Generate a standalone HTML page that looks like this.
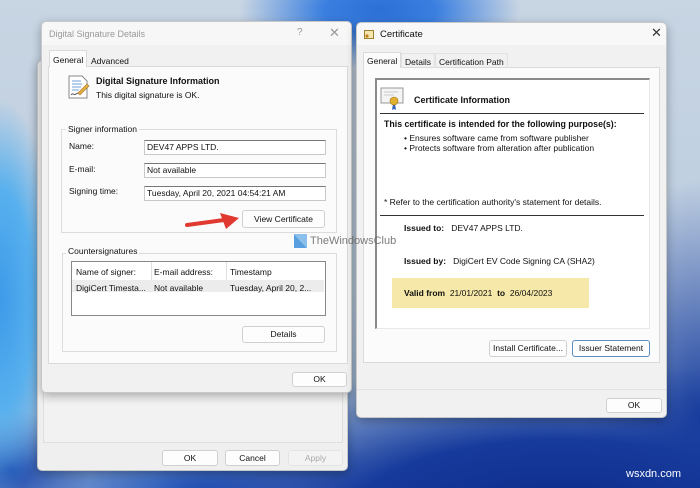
<!DOCTYPE html>
<html><head><meta charset="utf-8"><style>
*{box-sizing:border-box;margin:0;padding:0}
body{width:700px;height:488px;overflow:hidden;position:relative;font-family:"Liberation Sans",sans-serif;font-size:8.5px;color:#111;
background:
radial-gradient(ellipse 140px 60px at 380px 10px,#2c6fd6 0%,#3a7fe0 40%,rgba(80,140,220,0) 100%),
radial-gradient(ellipse 60px 200px at 0px 300px,#3d9ae8 0%,#58b0ee 55%,rgba(120,180,230,0) 100%),
radial-gradient(ellipse 80px 60px at 10px 470px,#1640a8 0%,rgba(30,70,170,0) 100%),
radial-gradient(ellipse 420px 160px at 560px 520px,#0d2a88 0%,#163a9c 50%,rgba(30,70,170,0) 100%),
radial-gradient(ellipse 120px 240px at 700px 420px,#1b3f9e 0%,rgba(40,80,170,0) 100%),
radial-gradient(ellipse 200px 80px at 200px 495px,#1d4fb8 0%,rgba(40,90,190,0) 100%),
linear-gradient(180deg,#c8d5e3 0%,#bccde0 60%,#8fb0d8 100%);}
.abs{position:absolute}
.win{position:absolute;background:#f0f0f0;border:1px solid #c8c8c8;border-radius:5px;box-shadow:0 3px 10px rgba(0,0,0,.3)}
.btn{position:absolute;background:#fdfdfd;border:1px solid #d0d0d0;border-radius:3px;text-align:center;font-size:8.5px;color:#111}
.field{position:absolute;background:#fff;border:1px solid #c8c8c8;border-top:1.5px solid #777;padding-left:2px;font-size:8.5px;line-height:13px}
.grp{position:absolute;border:1px solid #dcdcdc}
.lbl{position:absolute;white-space:nowrap}
b{font-weight:bold}
</style></head><body>

<div class="win" style="left:37px;top:60px;width:311px;height:411px;background:#efefef">
  <div class="abs" style="left:5px;top:0;width:300px;height:382px;border:1px solid #dedede;background:#f2f2f2"></div>
</div>
<div class="btn" style="left:162px;top:450px;width:56px;height:16px;line-height:14px">OK</div>
<div class="btn" style="left:225px;top:450px;width:55px;height:16px;line-height:14px">Cancel</div>
<div class="btn" style="left:288px;top:450px;width:55px;height:16px;line-height:14px;color:#aaa;background:#f3f3f3;border-color:#e4e4e4">Apply</div>

<div class="win" style="left:41px;top:21px;width:311px;height:372px;background:#f1f1f1">
  <div class="abs" style="left:0;top:0;width:309px;height:23px;background:#f7f7f7;border-radius:5px 5px 0 0"></div>
  <div class="lbl" style="left:7px;top:7px;color:#999;font-size:9px">Digital Signature Details</div>
  <div class="lbl" style="left:255px;top:5px;color:#999;font-size:10px">?</div>
  <div class="lbl" style="left:287px;top:3px;color:#999;font-size:13px">✕</div>
  <div class="abs" style="left:6px;top:44px;width:300px;height:298px;background:#fbfbfb;border:1px solid #dadada"></div>
  <div class="abs" style="left:7px;top:28px;width:38px;height:17px;background:#fbfbfb;border:1px solid #dadada;border-bottom:none"></div>
  <div class="lbl" style="left:11px;top:33px">General</div>
  <div class="lbl" style="left:49px;top:34px">Advanced</div>
  <svg class="abs" style="left:25px;top:52px" width="24" height="26" viewBox="0 0 24 26">
    <path d="M2 2h13l5 5v17H2z" fill="#fff" stroke="#888"/>
    <path d="M5 7h9M5 10h10M5 13h9M5 16h7" stroke="#6fa0d8"/>
    <path d="M4 21c2-3 3 1 5-1s2 0 4-1" stroke="#555" fill="none"/>
    <path d="M11 19l9-9 2 2-9 9z" fill="#e8b040" stroke="#a07020" stroke-width=".6"/>
  </svg>
  <div class="lbl" style="left:54px;top:54px;font-weight:bold;font-size:9px">Digital Signature Information</div>
  <div class="lbl" style="left:54px;top:68px">This digital signature is OK.</div>
  <div class="grp" style="left:19px;top:107px;width:276px;height:104px"></div>
  <div class="lbl" style="left:24px;top:102px;background:#fbfbfb;padding:0 2px">Signer information</div>
  <div class="lbl" style="left:27px;top:119px">Name:</div>
  <div class="field" style="left:102px;top:118px;width:182px;height:15px">DEV47 APPS LTD.</div>
  <div class="lbl" style="left:27px;top:142px">E-mail:</div>
  <div class="field" style="left:102px;top:141px;width:182px;height:15px">Not available</div>
  <div class="lbl" style="left:27px;top:164px">Signing time:</div>
  <div class="field" style="left:102px;top:164px;width:182px;height:15px">Tuesday, April 20, 2021 04:54:21 AM</div>
  <div class="btn" style="left:200px;top:188px;width:83px;height:18px;line-height:16px">View Certificate</div>
  <svg class="abs" style="left:142px;top:189px" width="58" height="20" viewBox="0 0 58 20">
    <path d="M3 14L40 9" stroke="#e03a30" stroke-width="4" stroke-linecap="round"/>
    <path d="M36 2L55 7L42 18z" fill="#e03a30"/>
  </svg>
  <div class="grp" style="left:20px;top:231px;width:275px;height:99px"></div>
  <div class="lbl" style="left:24px;top:224px;background:#fbfbfb;padding:0 2px">Countersignatures</div>
  <div class="abs" style="left:29px;top:239px;width:255px;height:55px;background:#fff;border:1px solid #888"></div>
  <div class="abs" style="left:109px;top:240px;width:1px;height:18px;background:#e0e0e0"></div>
  <div class="abs" style="left:184px;top:240px;width:1px;height:18px;background:#e0e0e0"></div>
  <div class="abs" style="left:30px;top:258px;width:252px;height:12px;background:#ececec"></div>
  <div class="lbl" style="left:34px;top:245px">Name of signer:</div>
  <div class="lbl" style="left:112px;top:245px">E-mail address:</div>
  <div class="lbl" style="left:188px;top:245px">Timestamp</div>
  <div class="lbl" style="left:34px;top:261px">DigiCert Timesta...</div>
  <div class="lbl" style="left:112px;top:261px">Not available</div>
  <div class="lbl" style="left:188px;top:261px">Tuesday, April 20, 2...</div>
  <div class="btn" style="left:200px;top:304px;width:83px;height:17px;line-height:15px">Details</div>
  <div class="btn" style="left:250px;top:350px;width:55px;height:15px;line-height:13px">OK</div>
</div>

<div class="win" style="left:356px;top:22px;width:311px;height:396px;background:#f1f1f1">
  <div class="abs" style="left:0;top:0;width:309px;height:22px;background:#f8f8f8;border-radius:5px 5px 0 0"></div>
  <svg class="abs" style="left:7px;top:7px" width="10" height="9"><rect x=".5" y=".5" width="9" height="8" fill="#f5e6b0" stroke="#a08030"/><circle cx="3" cy="6" r="1.6" fill="#c08020"/></svg>
  <div class="lbl" style="left:23px;top:6px;font-size:9.5px">Certificate</div>
  <div class="lbl" style="left:294px;top:2px;font-size:13px;color:#333">✕</div>
  <div class="abs" style="left:6px;top:44px;width:297px;height:296px;background:#fbfbfb;border:1px solid #dadada"></div>
  <div class="abs" style="left:6px;top:29px;width:38px;height:16px;background:#fbfbfb;border:1px solid #dadada;border-bottom:none"></div>
  <div class="abs" style="left:44px;top:30px;width:34px;height:15px;border:1px solid #e2e2e2;border-bottom:none"></div>
  <div class="abs" style="left:78px;top:30px;width:73px;height:15px;border:1px solid #e2e2e2;border-bottom:none"></div>
  <div class="lbl" style="left:10px;top:33px">General</div>
  <div class="lbl" style="left:48px;top:34px">Details</div>
  <div class="lbl" style="left:82px;top:34px">Certification Path</div>
  <div class="abs" style="left:18px;top:55px;width:275px;height:251px;background:#fff;border-left:2px solid #8a8a8a;border-top:2px solid #8a8a8a;border-right:1px solid #e8e8e8;border-bottom:1px solid #e8e8e8"></div>
  <svg class="abs" style="left:23px;top:63px" width="26" height="26" viewBox="0 0 26 26">
    <rect x="1" y="2" width="22" height="15" fill="#f4f4f4" stroke="#999"/>
    <path d="M4 6h14M4 9h10" stroke="#ccc"/>
    <path d="M13 18l-1 6 2-1 2 1-1-6z" fill="#3060c0"/>
    <circle cx="14" cy="15" r="4" fill="#e0b030" stroke="#a07010" stroke-width=".6"/>
  </svg>
  <div class="lbl" style="left:57px;top:72px;font-weight:bold;font-size:9px">Certificate Information</div>
  <div class="abs" style="left:23px;top:90px;width:264px;height:1px;background:#333"></div>
  <div class="lbl" style="left:27px;top:96px;font-weight:bold;font-size:8.8px">This certificate is intended for the following purpose(s):</div>
  <div class="lbl" style="left:47px;top:110px">• Ensures software came from software publisher</div>
  <div class="lbl" style="left:47px;top:120px">• Protects software from alteration after publication</div>
  <div class="lbl" style="left:27px;top:174px">* Refer to the certification authority's statement for details.</div>
  <div class="abs" style="left:23px;top:192px;width:264px;height:1px;background:#333"></div>
  <div class="lbl" style="left:47px;top:200px"><b>Issued to:</b>&nbsp;&nbsp; DEV47 APPS LTD.</div>
  <div class="lbl" style="left:47px;top:233px"><b>Issued by:</b>&nbsp;&nbsp; DigiCert EV Code Signing CA (SHA2)</div>
  <div class="abs" style="left:35px;top:255px;width:197px;height:30px;background:#f6e8a8"></div>
  <div class="lbl" style="left:47px;top:265px"><b>Valid from</b>&nbsp; 21/01/2021&nbsp; <b>to</b>&nbsp; 26/04/2023</div>
  <div class="btn" style="left:132px;top:317px;width:78px;height:17px;line-height:15px">Install Certificate...</div>
  <div class="btn" style="left:215px;top:317px;width:78px;height:17px;line-height:15px;border-color:#5c8ec4">Issuer Statement</div>
  <div class="abs" style="left:0;top:366px;width:309px;height:1px;background:#e2e2e2"></div>
  <div class="btn" style="left:249px;top:375px;width:56px;height:15px;line-height:13px">OK</div>
</div>

<svg class="abs" style="left:294px;top:234px" width="13" height="14"><path d="M0 0L13 14H0z" fill="#5aa0e0"/><path d="M0 0h13v14z" fill="#8cc0ec"/></svg>
<div class="lbl" style="left:310px;top:235px;font-size:11px;color:#666;opacity:.85">TheWindowsClub</div>

<div class="lbl" style="left:626px;top:468px;font-size:11px;color:#fff">wsxdn.com</div>
</body></html>
